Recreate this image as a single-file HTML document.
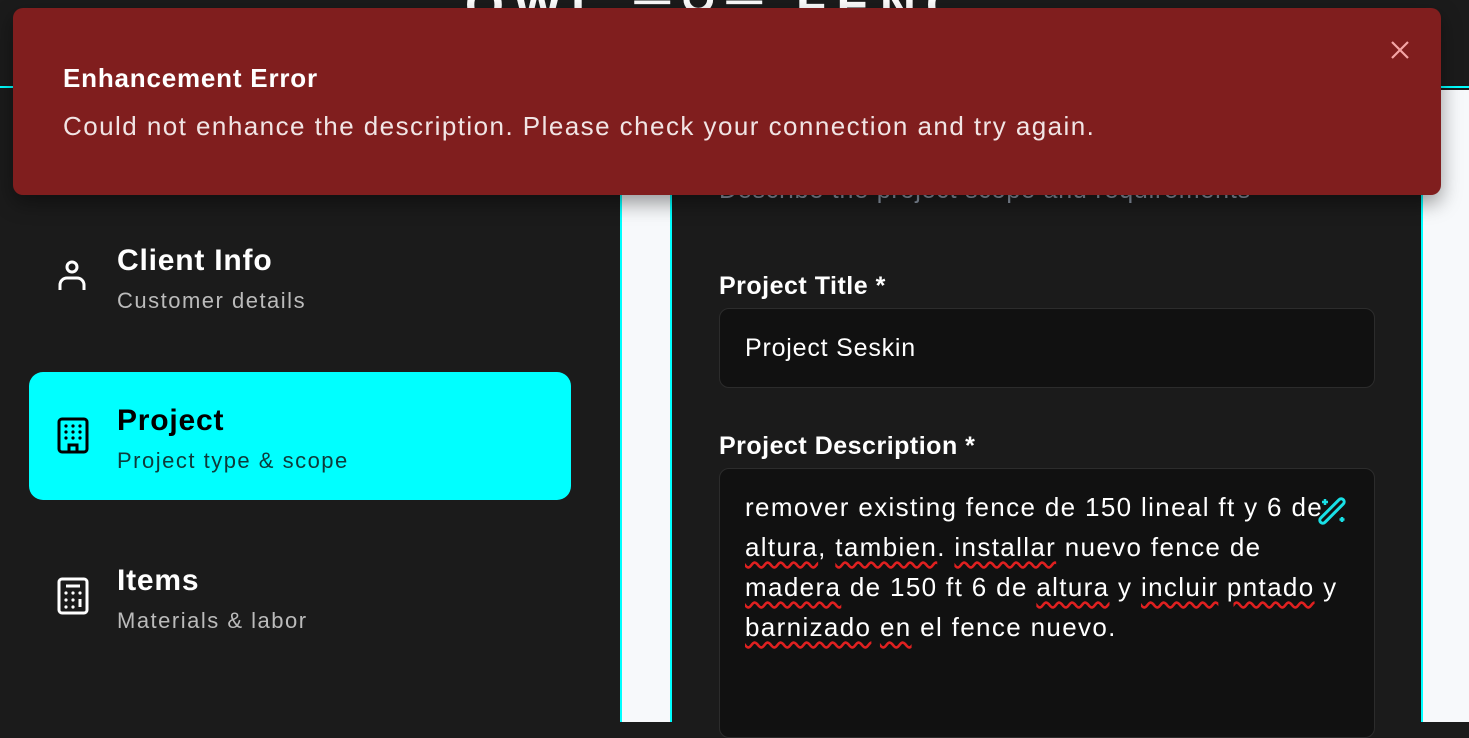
<!DOCTYPE html>
<html><head><meta charset="utf-8"><style>
*{margin:0;padding:0;box-sizing:border-box}
body{width:1469px;height:722px;overflow:hidden;background:#1b1b1b;font-family:"Liberation Sans",sans-serif;position:relative}
.hdr{position:absolute;left:0;top:0;width:1469px;height:88px;background:#1b1b1b;border-bottom:2px solid #00ffff}
.logo{position:absolute;left:465px;top:-24px;color:#fff;font-size:50px;font-weight:bold;letter-spacing:10px}
.side{position:absolute;left:0;top:90px;width:620px;height:632px;background:#1b1b1b}
.strip{position:absolute;top:90px;height:632px;background:#f7f9fb}
.card{position:absolute;left:670px;top:90px;width:753px;height:632px;background:#1b1b1b;border-left:2px solid #00ffff;border-right:2px solid #00ffff}
.nav{position:absolute;left:29px;width:542px;height:128px;border-radius:14px}
.nav .t{position:absolute;left:88px;top:32px;font-size:30px;font-weight:bold;color:#fff;letter-spacing:0.8px}
.nav .s{position:absolute;left:88px;top:76px;font-size:22px;color:#bbb;letter-spacing:1.5px}
.nav svg{position:absolute;left:28px;top:45px}
.act{background:#00ffff}.act .t{color:#000}.act .s{color:#0d3b3b}
.lbl{position:absolute;left:719px;font-size:25px;font-weight:bold;color:#fff;letter-spacing:0.5px}
.inp{position:absolute;left:719px;width:656px;background:#111;border:1px solid #2c2c2c;border-radius:10px;color:#fff;font-size:25px;letter-spacing:0.8px}
.toast{position:absolute;left:13px;top:8px;width:1428px;height:187px;background:#801e1e;border-radius:10px;box-shadow:0 8px 20px rgba(0,0,0,.4)}
u{text-decoration:underline wavy #e02020;text-underline-offset:5px}
</style></head><body>
<div class="hdr"><div class="logo">OWL ═⚲═ FENC</div></div>
<div class="side">
 <div class="nav" style="top:122px"><svg width="30" height="36" viewBox="0 0 30 36" fill="none" stroke="#fff" stroke-width="3"><circle cx="15" cy="10" r="5"/><path d="M3 33v-5a7 7 0 0 1 7-7h10a7 7 0 0 1 7 7v5"/></svg><div class="t">Client Info</div><div class="s">Customer details</div></div>
 <div class="nav act" style="top:282px"><svg width="32" height="38" viewBox="0 0 32 38" fill="none" stroke="#000" stroke-width="3"><rect x="2" y="2" width="28" height="33" rx="3"/><path d="M12 35v-7h8v7" /><g fill="#000" stroke="none"><circle cx="9" cy="9" r="1.6"/><circle cx="16" cy="9" r="1.6"/><circle cx="23" cy="9" r="1.6"/><circle cx="9" cy="15" r="1.6"/><circle cx="16" cy="15" r="1.6"/><circle cx="23" cy="15" r="1.6"/><circle cx="9" cy="21" r="1.6"/><circle cx="16" cy="21" r="1.6"/><circle cx="23" cy="21" r="1.6"/></g></svg><div class="t">Project</div><div class="s">Project type &amp; scope</div></div>
 <div class="nav" style="top:442px"><svg width="32" height="38" viewBox="0 0 32 38" fill="none" stroke="#fff" stroke-width="3"><rect x="2" y="2" width="28" height="34" rx="3"/><path d="M9 9h14M23 22v8"/><g fill="#fff" stroke="none"><circle cx="9" cy="16" r="1.6"/><circle cx="16" cy="16" r="1.6"/><circle cx="23" cy="16" r="1.6"/><circle cx="9" cy="23" r="1.6"/><circle cx="16" cy="23" r="1.6"/><circle cx="9" cy="30" r="1.6"/><circle cx="16" cy="30" r="1.6"/></g></svg><div class="t">Items</div><div class="s">Materials &amp; labor</div></div>
</div>
<div class="strip" style="left:620px;width:50px;border-left:2px solid #00ffff"></div>
<div class="strip" style="left:1423px;width:46px"></div>
<div class="card"></div>
<div style="position:absolute;left:719px;top:176px;font-size:25px;color:#8a94a3;letter-spacing:0.8px">Describe the project scope and requirements</div>
<div class="lbl" style="top:272px">Project Title *</div>
<div class="inp" style="top:308px;height:80px;padding:25px 25px">Project Seskin</div>
<div class="lbl" style="top:432px">Project Description *</div>
<div class="inp" style="top:468px;height:270px;padding:18px 25px;line-height:40px;font-size:26px;letter-spacing:1.35px">remover existing fence de 150 lineal ft y 6 de <u>altura</u>, <u>tambien</u>. <u>installar</u> nuevo fence de <u>madera</u> de 150 ft 6 de <u>altura</u> y <u>incluir</u> <u>pntado</u> y <u>barnizado</u> <u>en</u> el fence nuevo.</div>
<svg style="position:absolute;left:1315px;top:493px" width="34" height="34" viewBox="0 0 34 34" fill="none" stroke="#19e0e6" stroke-width="3"><rect x="14" y="2" width="6" height="32" rx="3" transform="rotate(45 17 18)"/><path d="M10 6v6M7 9h6M27 24v5M24.5 26.5h5" stroke-width="2.5"/></svg>
<div class="toast">
 <div style="position:absolute;left:50px;top:55px;font-size:26px;font-weight:bold;color:#fff;letter-spacing:0.8px">Enhancement Error</div>
 <div style="position:absolute;left:50px;top:103px;font-size:26px;color:#f1e4e4;letter-spacing:1.45px">Could not enhance the description. Please check your connection and try again.</div>
 <svg style="position:absolute;left:1377px;top:32px" width="20" height="20" viewBox="0 0 20 20" stroke="#f4a5a5" stroke-width="2.2"><path d="M2 2l16 16M18 2L2 18"/></svg>
</div>
</body></html>
